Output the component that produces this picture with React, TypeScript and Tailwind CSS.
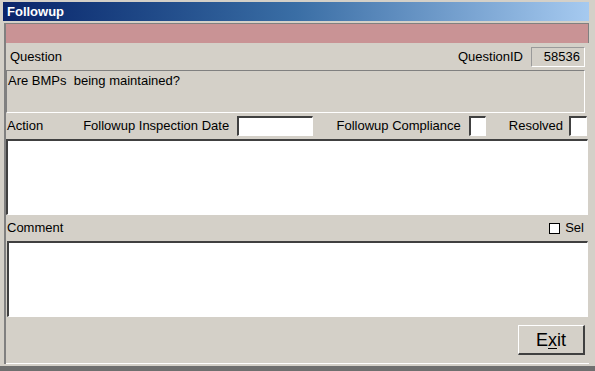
export default function App() {
  const sunkenWhite =
    "bg-white border-t-2 border-l-2 border-t-[#404040] border-l-[#404040] border-b border-r border-b-[#ffffff] border-r-[#ffffff]";
  return (
    <div className="w-[595px] h-[371px] bg-[#d4d0c8] font-['Liberation_Sans',Arial,sans-serif] text-[13px] text-black overflow-hidden flex flex-col">
      {/* title bar */}
      <div className="mt-[2px] ml-[3px] mr-[6px] h-[19px] flex items-center pl-[4px] bg-gradient-to-r from-[#0a246a] via-[#3a6ea5] to-[#a6caf0] text-white font-bold text-[13px]">
        Followup
      </div>

      {/* window body */}
      <div className="mt-[2px] ml-[4px] mr-[6px] flex-1 flex flex-col border-l-2 border-t border-[#808080]">
        <div className="h-[19px] bg-[#c99395] border-r border-r-[#808080]" />

        {/* question header */}
        <div className="h-[27px] flex items-center pl-[4px] pr-[4px]">
          <span>Question</span>
          <span className="ml-auto mr-[8px]">QuestionID</span>
          <div className="w-[54px] h-[20px] border border-[#9a9a9a] border-r-white border-b-white flex items-center justify-end pr-[4px]">
            58536
          </div>
        </div>

        {/* question text */}
        <div className="h-[43px] mr-[4px] px-[1px] pt-[2px] border-t border-l border-[#808080] border-r border-r-white border-b border-b-white leading-[15px]">
          Are BMPs&nbsp; being maintained?
        </div>

        {/* action header */}
        <div className="h-[26px] flex items-center pl-[1px] pr-[2px]">
          <span>Action</span>
          <span className="ml-[40px]">Followup Inspection Date</span>
          <div className={`ml-[8px] w-[76px] h-[20px] ${sunkenWhite}`} />
          <span className="ml-auto">Followup Compliance</span>
          <div className={`ml-[8px] w-[17px] h-[20px] ${sunkenWhite}`} />
          <span className="ml-[23px]">Resolved</span>
          <div className={`ml-[6px] w-[18px] h-[20px] ${sunkenWhite}`} />
        </div>

        {/* action text */}
        <div className={`h-[76px] mr-[1px] ${sunkenWhite}`} />

        {/* comment header */}
        <div className="h-[26px] flex items-center pl-[1px] pr-[5px]">
          <span>Comment</span>
          <div className="ml-auto w-[11px] h-[11px] bg-white border border-black" />
          <span className="ml-[5px]">Sel</span>
        </div>

        {/* comment text */}
        <div className={`h-[76px] ml-[1px] mr-[1px] ${sunkenWhite}`} />

        {/* footer */}
        <div className="flex-1 flex items-start justify-end pt-[8px] pr-[4px] border-b border-b-white">
          <button className="w-[67px] h-[30px] bg-[#d4d0c8] border-t border-l border-t-white border-l-white border-b-2 border-r-2 border-b-[#404040] border-r-[#404040] text-[18px] flex items-center justify-center leading-none">
            E<span className="underline underline-offset-2">x</span>it
          </button>
        </div>
      </div>
      <div className="h-[5px] bg-[#6f6f6f] mt-[2px]" />
    </div>
  );
}
